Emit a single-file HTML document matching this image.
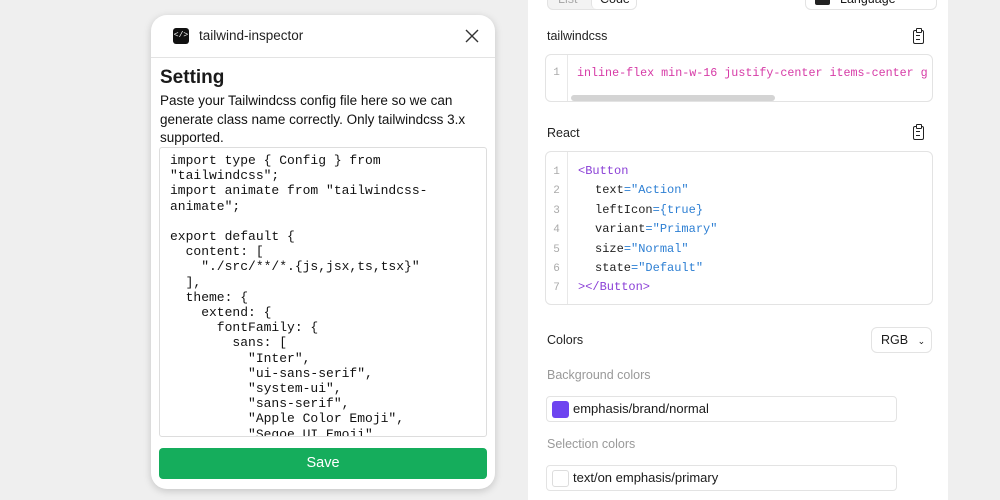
<!DOCTYPE html>
<html><head><style>
*{box-sizing:border-box;margin:0;padding:0}
body{width:1000px;height:500px;background:#efefef;font-family:"Liberation Sans",sans-serif;position:relative;overflow:hidden;color:#1a1a1a}
.card{position:absolute;left:151px;top:15px;width:344px;height:474px;background:#fff;border-radius:16px;box-shadow:0 2px 8px rgba(0,0,0,.18)}
.hdr{height:43px;border-bottom:1px solid #e3e3e3;position:relative}
.logo{position:absolute;left:22px;top:13px;width:16px;height:16px;background:#111;border-radius:3px;color:#fff;font-size:8px;text-align:center;line-height:16px;font-family:"Liberation Mono",monospace}
.ttl{position:absolute;left:48px;top:13px;font-size:13.5px;color:#222}
.x{position:absolute;right:14px;top:12px}
h1{position:absolute;left:9px;top:52px;font-size:19px;font-weight:bold}
.desc{position:absolute;left:9px;top:77px;width:335px;font-size:13.5px;line-height:18.5px;color:#111}
.ta{position:absolute;left:8px;top:132px;width:328px;height:290px;border:1px solid #ddd;border-radius:3px;overflow:hidden;padding:5px 0 0 10px;font-family:"Liberation Mono",monospace;font-size:13px;line-height:15.2px;white-space:pre;color:#111}
.save{position:absolute;left:8px;top:433px;width:328px;height:31px;background:#15ad5c;border-radius:4px;color:#fff;text-align:center;line-height:31px;font-size:14.5px}
.panel{position:absolute;left:528px;top:0;width:420px;height:500px;background:#fff}
.lbl{position:absolute;font-size:12.5px;color:#222}
.box{position:absolute;border:1px solid #e3e3e3;border-radius:6px;background:#fff;overflow:hidden}
.gut{position:absolute;left:0;top:0;bottom:0;width:22px;border-right:1px solid #e8e8e8;color:#aaa;font-family:"Liberation Mono",monospace;font-size:11px;text-align:center}
.code{position:absolute;left:31px;font-family:"Liberation Mono",monospace;white-space:pre}
.tag{color:#8a3fd6}.str{color:#2d7fd3}.at{color:#222}
.ind{display:inline-block;width:17px}
.clip{position:absolute;width:11px;height:14px;border:1.5px solid #222;border-radius:2px}
.clip:before{content:"";position:absolute;left:2px;top:-3px;width:4px;height:3px;border:1.5px solid #222;border-radius:1px;background:#fff}
.clip:after{content:"";position:absolute;left:2px;top:4px;width:4px;height:3px;border-top:1.2px solid #222;border-bottom:1.2px solid #222}
.chip{position:absolute;left:18px;height:26px;width:351px;border:1px solid #e3e3e3;border-radius:4px;font-size:13px;line-height:24px;padding-left:26px}
.sw{position:absolute;left:5px;top:4px;width:17px;height:17px;border-radius:3px}
</style></head><body>
<div class="card">
 <div class="hdr"><div class="logo">&lt;/&gt;</div><div class="ttl">tailwind-inspector</div>
 <svg class="x" width="18" height="18" viewBox="0 0 18 18"><path d="M3 3L15 15M15 3L3 15" stroke="#333" stroke-width="1.4"/></svg></div>
 <h1>Setting</h1>
 <div class="desc">Paste your Tailwindcss config file here so we can generate class name correctly. Only tailwindcss 3.x supported.</div>
 <div class="ta">import type { Config } from
"tailwindcss";
import animate from "tailwindcss-
animate";

export default {
  content: [
    "./src/**/*.{js,jsx,ts,tsx}"
  ],
  theme: {
    extend: {
      fontFamily: {
        sans: [
          "Inter",
          "ui-sans-serif",
          "system-ui",
          "sans-serif",
          "Apple Color Emoji",
          "Segoe UI Emoji",</div>
 <div class="save">Save</div>
</div>
<div class="panel">
 <div class="box" style="left:19px;top:-12px;width:90px;height:22px;background:#f3f3f3;font-size:12.5px;line-height:20px;color:#aaa;padding-left:10px">List<div style="position:absolute;left:43px;top:0;width:46px;height:20px;background:#fff;border-left:1px solid #e3e3e3;border-radius:5px;color:#222;padding-left:8px">Code</div></div>
 <div class="box" style="left:277px;top:-12px;width:132px;height:22px;font-size:12.5px;line-height:20px;padding-left:34px">Language<div style="position:absolute;left:9px;top:6px;width:15px;height:10px;background:#222;border-radius:2px"></div></div>
 <div class="lbl" style="left:19px;top:29px">tailwindcss</div>
 <div class="clip" style="left:385px;top:30px"></div>
 <div class="box" style="left:17px;top:54px;width:388px;height:48px">
  <div class="gut" style="padding-top:12px">1</div>
  <div class="code" style="top:11px;font-size:11.7px;color:#d63aa6">inline-flex min-w-16 justify-center items-center g</div>
  <div style="position:absolute;left:25px;top:40px;width:204px;height:6px;border-radius:3px;background:#d4d4d4"></div>
 </div>
 <div class="lbl" style="left:19px;top:126px">React</div>
 <div class="clip" style="left:385px;top:126px"></div>
 <div class="box" style="left:17px;top:151px;width:388px;height:154px">
  <div class="gut" style="padding-top:11px;line-height:19.4px">1<br>2<br>3<br>4<br>5<br>6<br>7</div>
  <div class="code" style="top:10px;font-size:12px;line-height:19.4px;left:32px"><span class="tag">&lt;Button</span>
<span class="ind"></span><span class="at">text</span><span class="str">="Action"</span>
<span class="ind"></span><span class="at">leftIcon</span><span class="str">={true}</span>
<span class="ind"></span><span class="at">variant</span><span class="str">="Primary"</span>
<span class="ind"></span><span class="at">size</span><span class="str">="Normal"</span>
<span class="ind"></span><span class="at">state</span><span class="str">="Default"</span>
<span class="tag">&gt;&lt;/Button&gt;</span></div>
 </div>
 <div class="lbl" style="left:19px;top:333px">Colors</div>
 <div class="box" style="left:343px;top:327px;width:61px;height:26px;font-size:12.5px;line-height:24px;padding-left:9px">RGB <span style="font-size:9px;margin-left:6px">⌄</span></div>
 <div class="lbl" style="left:19px;top:368px;color:#999">Background colors</div>
 <div class="chip" style="top:396px"><div class="sw" style="background:#6e44f0"></div>emphasis/brand/normal</div>
 <div class="lbl" style="left:19px;top:437px;color:#999">Selection colors</div>
 <div class="chip" style="top:465px"><div class="sw" style="border:1px solid #ddd"></div>text/on emphasis/primary</div>
</div>
</body></html>
